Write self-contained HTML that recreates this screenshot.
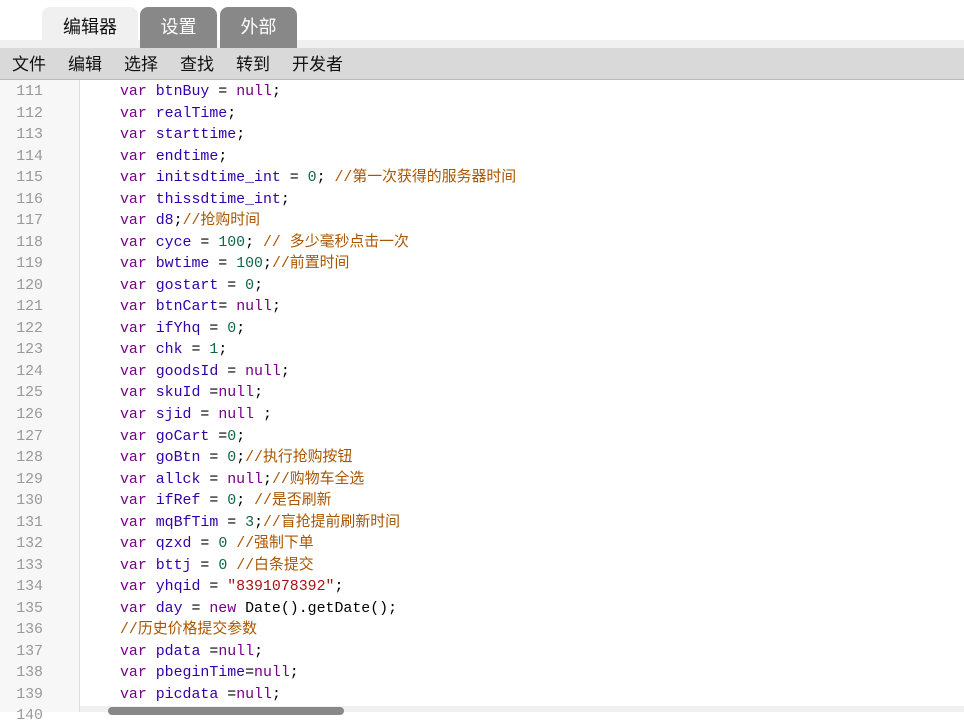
<!DOCTYPE html>
<html><head><meta charset="utf-8"><style>
body{margin:0;width:964px;height:712px;overflow:hidden;background:#fff;font-family:"Liberation Sans","Noto Sans CJK SC",sans-serif;position:relative}
.tab{position:absolute;top:7px;height:41px;border-radius:8px 8px 0 0;font-size:18px;line-height:40px;text-align:center}
.band{position:absolute;left:0;top:40px;width:964px;height:8px;background:#f0f0f0}
.menu{position:absolute;left:0;top:48px;width:964px;height:31px;background:#d9d9d9;border-bottom:1px solid #bbb;font-size:17px;line-height:33px;color:#111}
.menu span{position:absolute}
.gut{position:absolute;left:0;top:80px;width:79px;height:632px;background:#f7f7f7;border-right:1px solid #ddd}
.code{position:absolute;left:0;top:82px;width:964px;font-family:"Liberation Mono","Noto Sans CJK SC",monospace;font-size:14.9px}
.l{height:21.54px;line-height:21.54px;position:relative}
.n{position:absolute;left:0;width:43px;text-align:right;color:#999}
.c{position:absolute;left:120px;color:#000;white-space:pre}
.k{color:#770088}.d{color:#3300aa}.m{color:#116644}.o{color:#aa5500}.s{color:#aa1111}
</style></head><body>
<div class="band"></div>
<div class="tab" style="left:42px;width:96px;background:#f0f0f0;color:#111">编辑器</div>
<div class="tab" style="left:140px;width:77px;background:#888;color:#fff">设置</div>
<div class="tab" style="left:220px;width:77px;background:#888;color:#fff">外部</div>
<div class="menu"><span style="left:12px">文件</span><span style="left:68px">编辑</span><span style="left:124px">选择</span><span style="left:180px">查找</span><span style="left:236px">转到</span><span style="left:292px">开发者</span></div>
<div class="gut"></div>
<div class="code"><div class="l"><span class="n">111</span><span class="c"><span class="k">var</span> <span class="d">btnBuy</span> = <span class="k">null</span>;</span></div><div class="l"><span class="n">112</span><span class="c"><span class="k">var</span> <span class="d">realTime</span>;</span></div><div class="l"><span class="n">113</span><span class="c"><span class="k">var</span> <span class="d">starttime</span>;</span></div><div class="l"><span class="n">114</span><span class="c"><span class="k">var</span> <span class="d">endtime</span>;</span></div><div class="l"><span class="n">115</span><span class="c"><span class="k">var</span> <span class="d">initsdtime_int</span> = <span class="m">0</span>; <span class="o">//第一次获得的服务器时间</span></span></div><div class="l"><span class="n">116</span><span class="c"><span class="k">var</span> <span class="d">thissdtime_int</span>;</span></div><div class="l"><span class="n">117</span><span class="c"><span class="k">var</span> <span class="d">d8</span>;<span class="o">//抢购时间</span></span></div><div class="l"><span class="n">118</span><span class="c"><span class="k">var</span> <span class="d">cyce</span> = <span class="m">100</span>; <span class="o">// 多少毫秒点击一次</span></span></div><div class="l"><span class="n">119</span><span class="c"><span class="k">var</span> <span class="d">bwtime</span> = <span class="m">100</span>;<span class="o">//前置时间</span></span></div><div class="l"><span class="n">120</span><span class="c"><span class="k">var</span> <span class="d">gostart</span> = <span class="m">0</span>;</span></div><div class="l"><span class="n">121</span><span class="c"><span class="k">var</span> <span class="d">btnCart</span>= <span class="k">null</span>;</span></div><div class="l"><span class="n">122</span><span class="c"><span class="k">var</span> <span class="d">ifYhq</span> = <span class="m">0</span>;</span></div><div class="l"><span class="n">123</span><span class="c"><span class="k">var</span> <span class="d">chk</span> = <span class="m">1</span>;</span></div><div class="l"><span class="n">124</span><span class="c"><span class="k">var</span> <span class="d">goodsId</span> = <span class="k">null</span>;</span></div><div class="l"><span class="n">125</span><span class="c"><span class="k">var</span> <span class="d">skuId</span> =<span class="k">null</span>;</span></div><div class="l"><span class="n">126</span><span class="c"><span class="k">var</span> <span class="d">sjid</span> = <span class="k">null</span> ;</span></div><div class="l"><span class="n">127</span><span class="c"><span class="k">var</span> <span class="d">goCart</span> =<span class="m">0</span>;</span></div><div class="l"><span class="n">128</span><span class="c"><span class="k">var</span> <span class="d">goBtn</span> = <span class="m">0</span>;<span class="o">//执行抢购按钮</span></span></div><div class="l"><span class="n">129</span><span class="c"><span class="k">var</span> <span class="d">allck</span> = <span class="k">null</span>;<span class="o">//购物车全选</span></span></div><div class="l"><span class="n">130</span><span class="c"><span class="k">var</span> <span class="d">ifRef</span> = <span class="m">0</span>; <span class="o">//是否刷新</span></span></div><div class="l"><span class="n">131</span><span class="c"><span class="k">var</span> <span class="d">mqBfTim</span> = <span class="m">3</span>;<span class="o">//盲抢提前刷新时间</span></span></div><div class="l"><span class="n">132</span><span class="c"><span class="k">var</span> <span class="d">qzxd</span> = <span class="m">0</span> <span class="o">//强制下单</span></span></div><div class="l"><span class="n">133</span><span class="c"><span class="k">var</span> <span class="d">bttj</span> = <span class="m">0</span> <span class="o">//白条提交</span></span></div><div class="l"><span class="n">134</span><span class="c"><span class="k">var</span> <span class="d">yhqid</span> = <span class="s">"8391078392"</span>;</span></div><div class="l"><span class="n">135</span><span class="c"><span class="k">var</span> <span class="d">day</span> = <span class="k">new</span> Date().getDate();</span></div><div class="l"><span class="n">136</span><span class="c"><span class="o">//历史价格提交参数</span></span></div><div class="l"><span class="n">137</span><span class="c"><span class="k">var</span> <span class="d">pdata</span> =<span class="k">null</span>;</span></div><div class="l"><span class="n">138</span><span class="c"><span class="k">var</span> <span class="d">pbeginTime</span>=<span class="k">null</span>;</span></div><div class="l"><span class="n">139</span><span class="c"><span class="k">var</span> <span class="d">picdata</span> =<span class="k">null</span>;</span></div><div class="l"><span class="n">140</span></div></div>
<div style="position:absolute;left:80px;top:706px;width:884px;height:6px;background:#f0f0f0"></div>
<div style="position:absolute;left:108px;top:707px;width:236px;height:8px;border-radius:4px;background:#888"></div>
</body></html>
